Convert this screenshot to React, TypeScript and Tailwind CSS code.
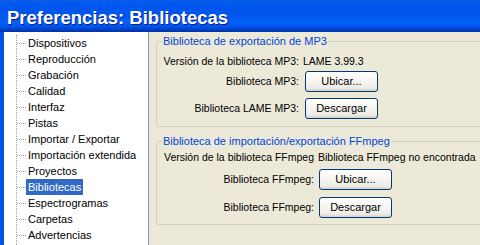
import React from 'react';

const pages = [
  "Dispositivos",
  "Reproducción",
  "Grabación",
  "Calidad",
  "Interfaz",
  "Pistas",
  "Importar / Exportar",
  "Importación extendida",
  "Proyectos",
  "Bibliotecas",
  "Espectrogramas",
  "Carpetas",
  "Advertencias",
]

function XpButton({ children }: { children: React.ReactNode }) {
  return (
    <button className="h-[21px] w-[73px] rounded-[3px] border border-[#003C74] bg-[linear-gradient(to_bottom,#FFFFFF_0%,#F6F5F0_45%,#ECEBE5_85%,#D6D0C5_100%)] text-[11px] leading-none text-black">
      {children}
    </button>
  )
}

function Group({ title, labelWidth, children, className }: { title: string; labelWidth: string; children: React.ReactNode; className?: string }) {
  return (
    <fieldset className={`w-[340px] rounded-[3px] border border-[#D0D0BF] pl-[6px] ${className ?? ''}`}>
      <legend className="-ml-[1px] px-[1px] text-[11px] leading-[14px] text-[#0046D5]">{title}</legend>
      <div className={labelWidth}>{children}</div>
    </fieldset>
  )
}

export default function App() {
  return (
    <div className="w-[480px] h-[245px] overflow-hidden flex flex-col bg-[#ECE9D8] font-['Liberation_Sans',Arial,sans-serif] text-[11px] text-black">
      <div className="h-[32px] shrink-0 flex items-center pl-[7px] pt-[3px] bg-[linear-gradient(to_bottom,#0A5DE8_0%,#0058EE_12%,#0055EB_45%,#0261FA_72%,#0052E6_84%,#0041C8_92%,#0033A6_100%)]">
        <span className="text-[18.5px] font-bold text-white [text-shadow:1px_1px_0_#0A1A8A]">
          Preferencias: Bibliotecas
        </span>
      </div>

      <div className="flex flex-1 min-h-0 border-l-4 border-[#0553E1]">
        {/* page tree */}
        <div className="w-[145px] shrink-0 bg-white border-r border-[#7F9DB9] pt-[3px] overflow-hidden">
          <div className="ml-[12px] pb-[20px] border-l border-dotted border-[#A0A0A0]">
            {pages.map((p) => (
              <div key={p} className="flex items-center h-[16px]">
                <span className="w-[9px] border-t border-dotted border-[#A0A0A0]" />
                <span
                  className={`px-[2px] h-[16px] leading-[16px] whitespace-nowrap ${
                    p === "Bibliotecas" ? "bg-[#316AC5] text-white" : ""
                  }`}
                >
                  {p}
                </span>
              </div>
            ))}
          </div>
        </div>

        {/* settings */}
        <div className="flex-1 min-w-0 pl-[7px] pt-[2px] overflow-hidden text-[10.5px]">
          <Group title="Biblioteca de exportación de MP3" labelWidth="pt-[6px] pb-[7px]">
            <div className="flex items-center h-[16px]">
              <span className="w-[136px] shrink-0 text-right whitespace-nowrap">Versión de la biblioteca MP3:</span>
              <span className="ml-[4px] whitespace-nowrap">LAME 3.99.3</span>
            </div>
            <div className="flex items-center mt-[1px]">
              <span className="w-[136px] shrink-0 text-right">Biblioteca MP3:</span>
              <span className="ml-[6px]"><XpButton>Ubicar...</XpButton></span>
            </div>
            <div className="flex items-center mt-[6px]">
              <span className="w-[136px] shrink-0 text-right">Biblioteca LAME MP3:</span>
              <span className="ml-[6px]"><XpButton>Descargar</XpButton></span>
            </div>
          </Group>

          <Group title="Biblioteca de importación/exportación FFmpeg" labelWidth="pt-[2px] pb-[6px]" className="mt-[7px]">
            <div className="flex items-center h-[16px]">
              <span className="w-[151px] shrink-0 text-right whitespace-nowrap">Versión de la biblioteca FFmpeg</span>
              <span className="ml-[4px] whitespace-nowrap">Biblioteca FFmpeg no encontrada</span>
            </div>
            <div className="flex items-center mt-[3px]">
              <span className="w-[151px] shrink-0 text-right">Biblioteca FFmpeg:</span>
              <span className="ml-[5px]"><XpButton>Ubicar...</XpButton></span>
            </div>
            <div className="flex items-center mt-[7px]">
              <span className="w-[151px] shrink-0 text-right">Biblioteca FFmpeg:</span>
              <span className="ml-[5px]"><XpButton>Descargar</XpButton></span>
            </div>
          </Group>
        </div>
      </div>
    </div>
  )
}
